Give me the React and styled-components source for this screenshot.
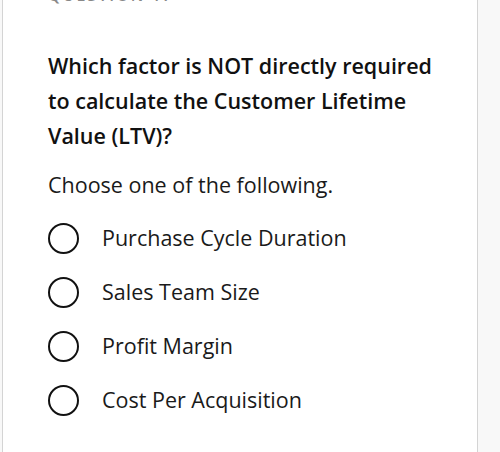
import React from 'react';
import styled, { createGlobalStyle } from 'styled-components';

const GlobalStyle = createGlobalStyle`
  html, body {
    margin: 0;
    padding: 0;
    background: #f8f8f8;
  }
  body {
    font-family: "Open Sans", "Liberation Sans", sans-serif;
    color: #1a1a1a;
  }
`;

const Page = styled.div`
  display: flex;
  width: 500px;
  height: 452px;
  overflow: hidden;
  background: #f8f8f8;
`;

const Card = styled.div`
  box-sizing: border-box;
  width: 476px;
  margin-left: 2px;
  background: #fff;
  border-left: 1px solid #d4d4d4;
  border-right: 1px solid #d4d4d4;
  padding: 0 30px 0 45px;
`;

const Header = styled.div`
  margin-top: -16px;
  height: 22px;
  font-size: 16px;
  font-weight: 600;
  letter-spacing: 2px;
  color: #888;
  line-height: 22px;
`;

const Question = styled.h2`
  margin: 42px 0 0;
  font-size: 21.5px;
  font-weight: 600;
  line-height: 35px;
  color: #111;
`;

const Prompt = styled.p`
  margin: 17px 0 23px;
  font-size: 21.5px;
  line-height: 30px;
  color: #1a1a1a;
`;

const Options = styled.div`
  display: flex;
  flex-direction: column;
  gap: 24px;
`;

const Option = styled.label`
  display: flex;
  align-items: center;
  height: 30px;
  gap: 23px;
  font-size: 21.5px;
  line-height: 30px;
  color: #1a1a1a;
  cursor: pointer;
`;

const Radio = styled.span`
  box-sizing: border-box;
  width: 31px;
  height: 31px;
  border: 2.5px solid #111;
  border-radius: 50%;
  flex-shrink: 0;
`;

const options = [
  'Purchase Cycle Duration',
  'Sales Team Size',
  'Profit Margin',
  'Cost Per Acquisition',
];

export default function App() {
  return (
    <>
      <GlobalStyle />
      <Page>
        <Card>
          <Header>QUESTION 17</Header>
          <Question>
            Which factor is NOT directly required to calculate the Customer Lifetime Value (LTV)?
          </Question>
          <Prompt>Choose one of the following.</Prompt>
          <Options>
            {options.map((o) => (
              <Option key={o}>
                <Radio />
                {o}
              </Option>
            ))}
          </Options>
        </Card>
      </Page>
    </>
  );
}
